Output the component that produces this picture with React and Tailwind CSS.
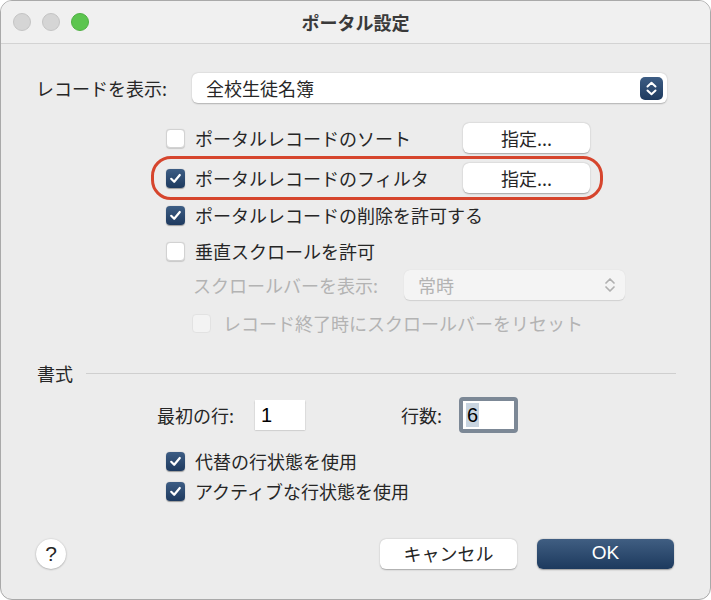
// App.jsx
// "ポータル設定" dialog — macOS-style portal setup sheet.

const JP = "font-['Noto_Sans_CJK_JP','Noto_Sans',sans-serif]";

function Checkbox({ checked = false, disabled = false }) {
  if (checked) {
    return (
      <span className="flex h-[19px] w-[19px] shrink-0 items-center justify-center rounded-[4px] bg-gradient-to-b from-[#3d5d84] to-[#1e3a5f] shadow-[0_0.5px_1px_rgba(0,0,0,0.35)]">
        <svg width="13" height="13" viewBox="0 0 13 13" fill="none">
          <path d="M2.2 6.8 L5.2 9.8 L10.8 3" stroke="white" strokeWidth="2.2" strokeLinecap="round" strokeLinejoin="round" />
        </svg>
      </span>
    );
  }
  return (
    <span
      className={[
        'block h-[19px] w-[19px] shrink-0 rounded-[4px]',
        disabled
          ? 'border border-[#e2e2e2] bg-[#f3f3f3]'
          : 'border border-[#d2d2d2] bg-white shadow-[0_0.5px_1px_rgba(0,0,0,0.15)]',
      ].join(' ')}
    />
  );
}

function PushButton({ children, className = '' }) {
  return (
    <button
      type="button"
      className={`flex h-[30px] shrink-0 items-center justify-center rounded-[6px] bg-white text-[18px] text-[#262626] shadow-[0_0.5px_1.5px_rgba(0,0,0,0.3)] ${className}`}
    >
      {children}
    </button>
  );
}

function CheckRow({ checked, label, className = '' }) {
  return (
    <div className={`flex h-[30px] items-center ${className}`}>
      <Checkbox checked={checked} />
      <span className="ml-[10px] text-[18px] text-[#262626]">{label}</span>
    </div>
  );
}

export default function App() {
  return (
    <div className={`flex h-[600px] w-[711px] flex-col overflow-hidden rounded-[12px] border border-[#a9a9a9] bg-[#ececec] ${JP}`}>
      {/* ── Title bar ─────────────────────────────────────────────────── */}
      <div className="grid h-[43px] shrink-0 grid-cols-[1fr_auto_1fr] items-center border-b border-[#d3d3d3] bg-[#f0f0f0]">
        <div className="flex items-center gap-[11px] pl-[12px]">
          <span className="h-[18px] w-[18px] rounded-full border border-[#c4c4c4] bg-[#d5d5d5]" />
          <span className="h-[18px] w-[18px] rounded-full border border-[#c4c4c4] bg-[#d5d5d5]" />
          <span className="h-[18px] w-[18px] rounded-full border border-[#4fb043] bg-[#5cc54f]" />
        </div>
        <h1 className="text-[18px] font-bold text-[#3a3a3a]">ポータル設定</h1>
        <div />
      </div>

      {/* ── Body ──────────────────────────────────────────────────────── */}
      <div className="flex flex-col pl-[35px] pr-[36px]">
        {/* Record to show */}
        <div className="mr-[7px] mt-[29px] flex h-[30px] items-center">
          <span className="w-[156px] shrink-0 text-[18px] text-[#262626]">レコードを表示:</span>
          <div className="flex h-[30px] flex-1 items-center justify-between rounded-[6px] bg-white pl-[14px] pr-[4px] shadow-[0_0.5px_1.5px_rgba(0,0,0,0.25)]">
            <span className="text-[18px] text-[#262626]">全校生徒名簿</span>
            <span className="flex h-[23px] w-[23px] items-center justify-center rounded-[5px] bg-gradient-to-b from-[#3d5d84] to-[#1e3a5f]">
              <svg width="23" height="23" viewBox="0 0 23 23" fill="none">
                <path d="M7.5 9.5 L11.5 5.8 L15.5 9.5" stroke="white" strokeWidth="2" strokeLinecap="round" strokeLinejoin="round" />
                <path d="M7.5 13.5 L11.5 17.2 L15.5 13.5" stroke="white" strokeWidth="2" strokeLinecap="round" strokeLinejoin="round" />
              </svg>
            </span>
          </div>
        </div>

        {/* Portal options */}
        <div className="ml-[115px] w-[452px]">
          <div className="mt-[20px] flex h-[30px] items-center pl-[15px]">
            <Checkbox />
            <span className="ml-[10px] w-[268px] shrink-0 text-[18px] text-[#262626]">ポータルレコードのソート</span>
            <PushButton className="w-[127px]">指定...</PushButton>
          </div>

          <div className="mt-[3px] flex h-[44px] items-center rounded-[20px] border-[3px] border-[#d6452d] pl-[12px]">
            <Checkbox checked />
            <span className="ml-[10px] w-[268px] shrink-0 text-[18px] text-[#262626]">ポータルレコードのフィルタ</span>
            <PushButton className="w-[127px]">指定...</PushButton>
          </div>

          <CheckRow checked label="ポータルレコードの削除を許可する" className="pl-[15px]" />
          <CheckRow label="垂直スクロールを許可" className="mt-[6px] pl-[15px]" />

          <div className="mt-[4px] flex h-[30px] items-center pl-[42px]">
            <span className="w-[211px] shrink-0 text-[18px] text-[#b3b3b3]">スクロールバーを表示:</span>
            <div className="flex h-[30px] w-[221px] shrink-0 items-center justify-between rounded-[6px] bg-[#f4f4f4] pl-[14px] pr-[8px] shadow-[0_0.5px_1px_rgba(0,0,0,0.12)]">
              <span className="text-[18px] text-[#b3b3b3]">常時</span>
              <svg width="14" height="20" viewBox="0 0 14 20" fill="none">
                <path d="M3 8 L7 4 L11 8" stroke="#b0b0b0" strokeWidth="1.7" strokeLinecap="round" strokeLinejoin="round" />
                <path d="M3 12 L7 16 L11 12" stroke="#b0b0b0" strokeWidth="1.7" strokeLinecap="round" strokeLinejoin="round" />
              </svg>
            </div>
          </div>

          <div className="mt-[8px] flex h-[30px] items-center pl-[41px]">
            <Checkbox disabled />
            <span className="ml-[12px] text-[18px] text-[#b3b3b3]">レコード終了時にスクロールバーをリセット</span>
          </div>
        </div>

        {/* ── 書式 ───────────────────────────────────────────────────── */}
        <div className="-mr-[2px] mt-[20px] flex h-[30px] items-center">
          <span className="ml-[1px] text-[18px] text-[#262626]">書式</span>
          <span className="ml-[13px] h-px flex-1 bg-[#cfcfcf]" />
        </div>

        <div className="ml-[121px] mt-[9px] flex h-[36px] items-center">
          <span className="w-[98px] shrink-0 text-[18px] text-[#262626]">最初の行:</span>
          <div className="flex h-[30px] w-[50px] shrink-0 items-center bg-white pl-[6px] font-['Liberation_Sans',sans-serif] text-[20px] text-black shadow-[0_0.5px_1.5px_rgba(0,0,0,0.3)]">
            1
          </div>
          <span className="ml-[96px] w-[58px] shrink-0 text-[18px] text-[#262626]">行数:</span>
          <div className="flex h-[36px] w-[59px] shrink-0 items-center rounded-[4px] border-[4px] border-[#7c8896] bg-white pl-[3px] font-['Liberation_Sans',sans-serif] text-[20px] text-black">
            <span className="bg-[#c8d4e0] px-px leading-[24px]">6</span>
          </div>
        </div>

        <CheckRow checked label="代替の行状態を使用" className="ml-[130px] mt-[13px]" />
        <CheckRow checked label="アクティブな行状態を使用" className="ml-[130px]" />

        {/* ── Footer ─────────────────────────────────────────────────── */}
        <div className="mt-[32px] flex h-[31px] items-center">
          <button
            type="button"
            className="flex h-[30px] w-[30px] items-center justify-center rounded-full bg-white font-['Liberation_Sans',sans-serif] text-[21px] text-[#262626] shadow-[0_0.5px_2px_rgba(0,0,0,0.35)]"
          >
            ?
          </button>
          <PushButton className="ml-auto w-[137px]">キャンセル</PushButton>
          <button
            type="button"
            className="ml-[20px] flex h-[30px] w-[137px] items-center justify-center rounded-[6px] bg-gradient-to-b from-[#405e82] to-[#1d3a5e] font-['Liberation_Sans',sans-serif] text-[19px] text-white shadow-[0_0.5px_1.5px_rgba(0,0,0,0.35)]"
          >
            OK
          </button>
        </div>
      </div>
    </div>
  );
}
